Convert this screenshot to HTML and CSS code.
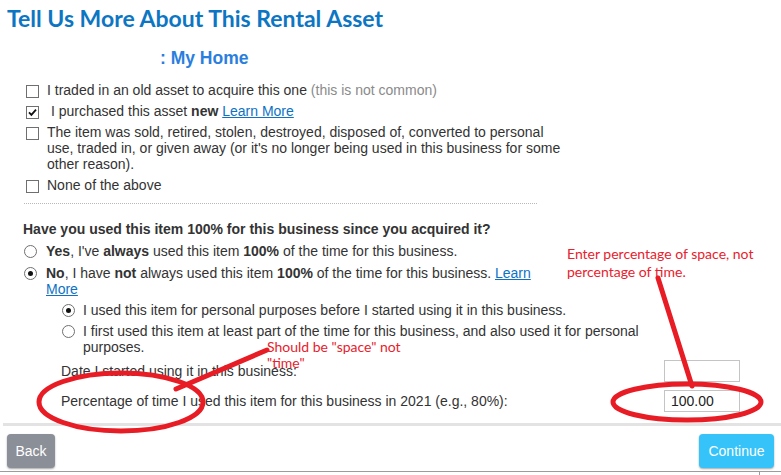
FILE: index.html
```html
<!DOCTYPE html>
<html>
<head>
<meta charset="utf-8">
<title>Tell Us More About This Rental Asset</title>
<link rel="stylesheet" href="styles.css">
</head>
<body>
<div class="page">
  <h1 class="title">Tell Us More About This Rental Asset</h1>
  <h2 class="subtitle">: My Home</h2>
  <ul class="options">
    <li class="opt"><span class="cb"></span><span class="opt-text">I traded in an old asset to acquire this one <span class="muted">(this is not common)</span></span></li>
    <li class="opt"><span class="cb"><svg class="check" viewBox="0 0 11 11"><path d="M2 5.3 L4.4 7.8 L9 2.6"/></svg></span><span class="opt-text lead">I purchased this asset <b>new</b> <a class="link">Learn More</a></span></li>
    <li class="opt"><span class="cb"></span><span class="opt-text">The item was sold, retired, stolen, destroyed, disposed of, converted to personal use, traded in, or given away (or it's no longer being used in this business for some other reason).</span></li>
    <li class="opt"><span class="cb"></span><span class="opt-text">None of the above</span></li>
  </ul>
  <div class="sep"></div>
  <p class="question">Have you used this item 100% for this business since you acquired it?</p>
  <ul class="radios">
    <li class="opt"><span class="rb"></span><span class="opt-text"><b>Yes</b>, I've <b>always</b> used this item <b>100%</b> of the time for this business.</span></li>
    <li class="opt"><span class="rb on"></span><span class="opt-text"><b>No</b>, I have <b>not</b> always used this item <b>100%</b> of the time for this business. <a class="link">Learn More</a></span></li>
  </ul>
  <ul class="sub">
    <li class="opt"><span class="rb on"></span><span class="opt-text">I used this item for personal purposes before I started using it in this business.</span></li>
    <li class="opt"><span class="rb"></span><span class="opt-text">I first used this item at least part of the time for this business, and also used it for personal purposes.</span></li>
  </ul>
  <div class="fields">
    <div class="field"><span class="label">Date I started using it in this business:</span><span class="input"></span></div>
    <div class="field"><span class="label">Percentage of time I used this item for this business in 2021 (e.g., 80%):</span><span class="input">100.00</span></div>
  </div>
</div>
<div class="divider"></div>
<div class="footer">
  <button class="btn back">Back</button>
  <button class="btn continue">Continue</button>
</div>
<div class="bottomline"><span class="tick"></span></div>

<svg class="markup" width="781" height="475" viewBox="0 0 781 475">
  <g fill="none" stroke="#e81c24" stroke-width="5" stroke-linecap="round">
    <line x1="658" y1="278" x2="692" y2="386"/>
    <ellipse cx="687" cy="402" rx="74" ry="18"/>
    <line x1="267" y1="350" x2="176" y2="389"/>
    <ellipse cx="121" cy="402" rx="82" ry="29"/>
  </g>
</svg>
<div class="note note-top">Enter percentage of space, not<br>percentage of time.</div>
<div class="note note-mid">Should be "space" not<br>"time"</div>
</body>
</html>
```

FILE: styles.css
```css
html, body {
  margin: 0;
  padding: 0;
}
body {
  position: relative;
  width: 781px;
  height: 475px;
  overflow: hidden;
  background: #fff;
  color: #333;
  font-family: "Liberation Sans", Arial, sans-serif;
  font-size: 14px;
}
.title {
  margin: 0;
  padding: 4px 0 0 7px;
  font-family: Lato, "Liberation Sans", sans-serif;
  font-weight: 700;
  font-size: 23px;
  line-height: 28px;
  color: #0d76c3;
}
.subtitle {
  margin: 16px 0 0;
  padding-left: 160px;
  font-family: "Liberation Sans", Arial, sans-serif;
  font-weight: 700;
  font-size: 17.5px;
  line-height: 20px;
  color: #2a7ede;
}
.options, .radios, .sub {
  list-style: none;
  margin: 0;
  display: flex;
  flex-direction: column;
}
.options {
  margin-top: 14px;
  padding-left: 26px;
  width: 535px;
  gap: 5px;
}
.opt {
  display: flex;
  align-items: flex-start;
  line-height: 16px;
}
.cb {
  flex: none;
  width: 11px;
  height: 11px;
  margin: 3px 8px 0 0;
  border: 1px solid #6f6f6f;
  background: #fff;
  display: flex;
}
.check {
  width: 11px;
  height: 11px;
}
.check path {
  fill: none;
  stroke: #111;
  stroke-width: 1.8;
}
.lead {
  padding-left: 4px;
}
.muted {
  color: #8a8a8a;
}
.link {
  color: #0d72c6;
  text-decoration: underline;
}
.sep {
  margin: 10px 0 0 24px;
  width: 513px;
  border-top: 1px dotted #b8b8b8;
}
.question {
  margin: 17px 0 0 23px;
  font-weight: 700;
  line-height: 16px;
}
.radios {
  margin-top: 6px;
  padding-left: 24px;
  width: 536px;
  gap: 6px;
}
.rb {
  flex: none;
  box-sizing: border-box;
  width: 13px;
  height: 13px;
  margin: 2px 9px 0 0;
  border: 1px solid #6f6f6f;
  border-radius: 50%;
  background: #fff;
  display: flex;
  align-items: center;
  justify-content: center;
}
.rb.on::after {
  content: "";
  width: 5px;
  height: 5px;
  border-radius: 50%;
  background: #111;
}
.sub {
  margin-top: 5px;
  padding-left: 62px;
  width: 598px;
  gap: 5px;
}
.sub .rb {
  margin-right: 8px;
}
.fields {
  box-sizing: border-box;
  width: 740px;
  margin-top: 5px;
  padding-left: 61px;
  display: flex;
  flex-direction: column;
  gap: 8px;
}
.field {
  display: flex;
  align-items: center;
  justify-content: space-between;
  height: 22px;
}
.input {
  box-sizing: border-box;
  width: 76px;
  height: 22px;
  padding-left: 6px;
  border: 1px solid #c4c4c4;
  font-size: 14px;
  line-height: 20px;
  color: #222;
}
.divider {
  margin: 11px 0 0 3px;
  height: 3px;
  background: #e3e3e3;
}
.footer {
  display: flex;
  justify-content: space-between;
  padding: 8px 7px 0;
}
.btn {
  height: 34px;
  border: none;
  border-radius: 4px;
  color: #fff;
  font-family: "Liberation Sans", Arial, sans-serif;
  font-size: 14px;
  padding: 0;
  box-shadow: 0 1px 2px rgba(0, 0, 0, 0.35);
}
.back {
  width: 48px;
  background: #8b8f98;
}
.continue {
  width: 75px;
  background: #35c3fa;
}
.bottomline {
  margin-top: 3px;
  height: 4px;
  border-top: 1px solid #9c9c9c;
  display: flex;
  justify-content: flex-end;
  padding-right: 21px;
}
.tick {
  width: 1px;
  height: 4px;
  background: #9c9c9c;
}
.markup {
  position: absolute;
  left: 0;
  top: 0;
  pointer-events: none;
}
.note {
  position: absolute;
  font-family: Lato, "Liberation Sans", sans-serif;
  font-size: 14px;
  color: #e8212c;
}
.note-top {
  left: 567px;
  top: 245px;
  line-height: 18px;
}
.note-mid {
  left: 267px;
  top: 339px;
  line-height: 16px;
}
```
